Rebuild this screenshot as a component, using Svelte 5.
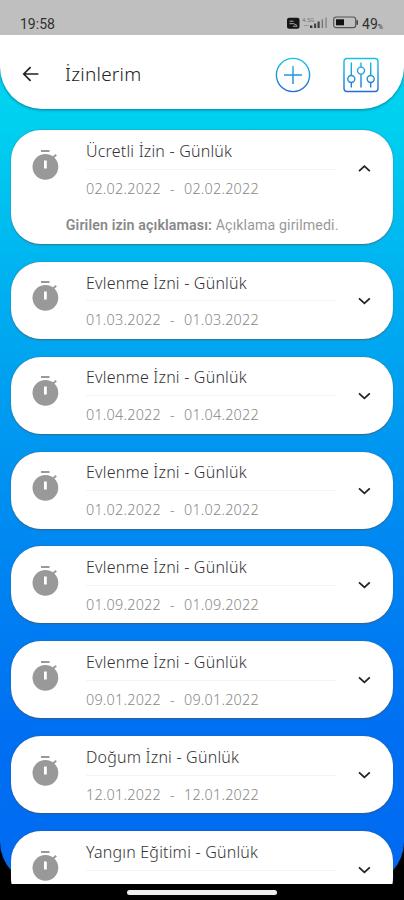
<script>
  const leaves = [
    { title: 'Ücretli İzin - Günlük', date: '02.02.2022', open: true },
    { title: 'Evlenme İzni - Günlük', date: '01.03.2022' },
    { title: 'Evlenme İzni - Günlük', date: '01.04.2022' },
    { title: 'Evlenme İzni - Günlük', date: '01.02.2022' },
    { title: 'Evlenme İzni - Günlük', date: '01.09.2022' },
    { title: 'Evlenme İzni - Günlük', date: '09.01.2022' },
    { title: 'Doğum İzni - Günlük', date: '12.01.2022' },
    { title: 'Yangın Eğitimi - Günlük' }
  ];
</script>

<div class="screen">
  <div class="status">
    <span class="clock">19:58</span>
    <div class="indicators">
      <svg width="42" height="14" viewBox="0 0 42 14">
        <rect x="0" y="1.8" width="12.5" height="11" rx="2" fill="#161616" />
        <path d="M2.5 5.2h4M2.5 7.7h4M6.5 7.5l3.5 2M6 10.2h4.5" stroke="#aaa" fill="none" />
        <text x="15" y="5.5" font-size="6" fill="#777">4.5G</text>
        <path d="M17 9.5h5" stroke="#999" />
        <rect x="23" y="9.5" width="2.4" height="2.5" fill="#333" />
        <rect x="27" y="7.5" width="2.2" height="4.5" fill="#444" />
        <rect x="30.5" y="5.5" width="2.2" height="6.5" fill="#444" />
        <rect x="34.6" y="3.5" width="1.5" height="8.5" fill="#777" />
        <rect x="38.3" y="1.5" width="1.5" height="10.5" fill="#888" />
      </svg>
      <svg class="battery" width="26" height="13" viewBox="0 0 26 13">
        <rect x="0.7" y="1" width="22" height="10.6" rx="2.4" fill="none" stroke="#555" stroke-width="1.2" />
        <rect x="3" y="3.3" width="8" height="6" fill="#111" />
        <path d="M24.2 4.2v4.5" stroke="#444" stroke-width="1.6" />
      </svg>
      <span class="percent">49<small>%</small></span>
    </div>
  </div>

  <main>
    <header>
      <svg class="back" width="18" height="18" viewBox="0 0 18 18">
        <path d="M17.4 9H3M9.6 2.2L2.8 9l6.8 6.8" fill="none" stroke="#222" stroke-width="1.7" />
      </svg>
      <h1>İzinlerim</h1>
      <svg class="add" width="36" height="36" viewBox="0 0 36 36">
        <defs>
          <linearGradient id="tint" gradientUnits="userSpaceOnUse" x1="0" y1="0" x2="0" y2="36">
            <stop offset="0" stop-color="#12c8e8" />
            <stop offset="1" stop-color="#2868d0" />
          </linearGradient>
        </defs>
        <g fill="none" stroke="url(#tint)" stroke-width="1.4">
          <circle cx="18" cy="18" r="16.6" />
          <path d="M18 9L18.01 27M9 18L27 18.01" />
        </g>
      </svg>
      <svg class="filter" width="36" height="36" viewBox="0 0 36 36">
        <g fill="none" stroke="url(#tint)" stroke-width="1.4">
          <rect x="1" y="1.5" width="34" height="33" rx="3" />
          <path d="M8.3 5.5v13M8.31 25.5v5M18 5.5v4.5M18.01 17.2v13.3M27.7 5.5v13M27.71 25.5v5" />
          <circle cx="8.3" cy="22" r="3.5" />
          <circle cx="18" cy="13.6" r="3.5" />
          <circle cx="27.7" cy="22" r="3.5" />
        </g>
      </svg>
    </header>

    <div class="list">
      {#each leaves as leave}
        <article class:open={leave.open}>
          <div class="row">
            <svg class="watch" width="28" height="32" viewBox="0 0 28 32">
              <path d="M10 2h8.5" stroke="#999" stroke-width="2" />
              <path d="M21.5 9l3.7-3.3" stroke="#999" stroke-width="2" />
              <circle cx="14.4" cy="17.8" r="12.9" fill="#999" />
              <path d="M14.4 11.5v8" stroke="#fff" stroke-width="2.8" />
            </svg>
            <div class="info">
              <div class="title">{leave.title}</div>
              {#if leave.date}
                <div class="dates"><span>{leave.date}</span><i>-</i><span>{leave.date}</span></div>
              {/if}
            </div>
            <svg class="chevron" width="14" height="10" viewBox="0 0 14 10">
              <path d={leave.open ? 'M2 7.2l5.4-5 5.4 5' : 'M2 2.3l5.4 5 5.4-5'} fill="none" stroke="#222" stroke-width="1.8" />
            </svg>
          </div>
          {#if leave.open}
            <p><b>Girilen izin açıklaması:</b> Açıklama girilmedi.</p>
          {/if}
        </article>
      {/each}
    </div>
  </main>

  <footer><div class="handle"></div></footer>
</div>

<style>
  :global(body) { background: #000; }
  .screen {
    width: 404px; height: 900px; overflow: hidden; background: #000;
    display: flex; flex-direction: column;
    font-family: "Noto Sans", "Open Sans", sans-serif;
  }
  .status {
    height: 35px; flex: none; box-sizing: border-box; background: #bfbfbf; color: #303030;
    display: flex; justify-content: space-between; padding: 14px 21px 0 20px;
    font-family: Roboto, sans-serif;
  }
  .clock { font-size: 14px; line-height: 20px; }
  .indicators { display: flex; align-items: flex-start; padding-top: 2px; }
  .battery { margin: 0 3px 0 4px; }
  .percent { font-size: 14px; line-height: 16px; }
  .percent small { font-size: 7px; }
  main {
    height: 849px; flex: none; border-radius: 0 0 42px 42px; clip-path: inset(0);
    background: linear-gradient(#00d8f0 0, #00cff0 95px, #00b4f0 230px, #009cf0 370px, #0084f2 540px, #006ff2 700px, #006af2 849px);
    display: flex; flex-direction: column;
  }
  header {
    height: 73.5px; flex: none; box-sizing: border-box; background: #fff;
    border-radius: 0 0 42px 42px; box-shadow: 0 1px 3px rgba(0, 50, 80, 0.5);
    display: flex; align-items: center; padding: 4px 25px 0 21px;
  }
  h1 {
    margin: 0 auto 0 26px; font-size: 19px; line-height: 26px; font-weight: 300; color: #222;
    letter-spacing: 0.25px;
  }
  .add { margin: 2px 32px 0 0; }
  .filter { margin-top: 2px; }
  .list { padding: 21.6px 10.7px 0 11px; display: flex; flex-direction: column; gap: 17.85px; }
  article {
    height: 77px; flex: none; box-sizing: border-box; background: #fff; border-radius: 30px;
    box-shadow: 0 0.5px 1.5px rgba(80, 80, 80, 0.65);
  }
  article.open { height: 114px; }
  .row { height: 77px; display: flex; padding: 0 22px 0 20px; box-sizing: border-box; }
  .watch { margin: 18.5px 27px 0 0; flex: none; }
  .info { width: 251px; flex: none; }
  .title {
    height: 39.5px; box-sizing: border-box; border-bottom: 1px solid #f4f4f4; padding-top: 8.7px;
    font-size: 16px; line-height: 24px; font-weight: 300; color: #333; white-space: nowrap;
    letter-spacing: 0.2px;
  }
  .dates {
    height: 37px; display: flex; align-items: center; font-size: 14.4px; font-weight: 300; color: #888;
    letter-spacing: 0.22px; white-space: nowrap;
  }
  .dates i { font-style: normal; width: 23px; text-align: center; }
  .chevron { margin: 34px 0 0 auto; }
  p {
    margin: 8px 0 0; text-align: center; font: 14.2px/20px Roboto, sans-serif; color: #999;
    letter-spacing: 0.12px; white-space: nowrap;
  }
  b { font-weight: 600; color: #888; }
  footer { display: flex; justify-content: center; padding-top: 6px; }
  .handle { width: 150px; height: 4.5px; border-radius: 3px; background: #eee; }
</style>
